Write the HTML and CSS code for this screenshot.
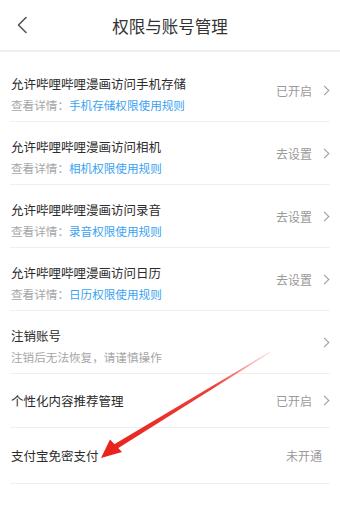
FILE: index.html
```html
<!DOCTYPE html>
<html lang="zh-CN">
<head>
<meta charset="utf-8">
<meta name="viewport" content="width=device-width, initial-scale=1">
<title>权限与账号管理</title>
<link rel="stylesheet" href="styles.css">
</head>
<body>

<header class="topbar">
  <svg class="back" width="12" height="18" viewBox="0 0 12 18">
    <path d="M10 1.5 L2.5 9 L10 16.5" fill="none" stroke="#555" stroke-width="1.6" stroke-linecap="round" stroke-linejoin="round"/>
  </svg>
  <h1 class="title">权限与账号管理</h1>
</header>

<div class="list">
  <div class="row">
    <div class="info">
      <p class="name">允许哔哩哔哩漫画访问手机存储</p>
      <p class="sub">查看详情：<span class="link">手机存储权限使用规则</span></p>
    </div>
    <div class="side"><span class="state">已开启</span><span class="arrow"></span></div>
  </div>
  <div class="row">
    <div class="info">
      <p class="name">允许哔哩哔哩漫画访问相机</p>
      <p class="sub">查看详情：<span class="link">相机权限使用规则</span></p>
    </div>
    <div class="side"><span class="state">去设置</span><span class="arrow"></span></div>
  </div>
  <div class="row">
    <div class="info">
      <p class="name">允许哔哩哔哩漫画访问录音</p>
      <p class="sub">查看详情：<span class="link">录音权限使用规则</span></p>
    </div>
    <div class="side"><span class="state">去设置</span><span class="arrow"></span></div>
  </div>
  <div class="row">
    <div class="info">
      <p class="name">允许哔哩哔哩漫画访问日历</p>
      <p class="sub">查看详情：<span class="link">日历权限使用规则</span></p>
    </div>
    <div class="side"><span class="state">去设置</span><span class="arrow"></span></div>
  </div>
  <div class="row">
    <div class="info">
      <p class="name">注销账号</p>
      <p class="sub">注销后无法恢复，请谨慎操作</p>
    </div>
    <div class="side"><span class="arrow"></span></div>
  </div>
  <div class="row single">
    <div class="info">
      <p class="name">个性化内容推荐管理</p>
    </div>
    <div class="side"><span class="state">已开启</span><span class="arrow"></span></div>
  </div>
  <div class="row single">
    <div class="info">
      <p class="name">支付宝免密支付</p>
    </div>
    <div class="side"><span class="state plain">未开通</span></div>
  </div>
</div>

<!-- red annotation arrow drawn over the list -->
<svg class="mark" width="340" height="519" viewBox="0 0 340 519">
  <defs>
    <linearGradient id="fade" x1="270" y1="352" x2="110" y2="450" gradientUnits="userSpaceOnUse">
      <stop offset="0" stop-color="#f2403a" stop-opacity="0.15"/>
      <stop offset="0.35" stop-color="#ec2a24" stop-opacity="0.9"/>
      <stop offset="1" stop-color="#e8231d"/>
    </linearGradient>
  </defs>
  <polygon points="270,351.6 270.4,352.4 116,449.5 113,445" fill="url(#fade)"/>
  <polygon points="101,458 110,439.5 122,452" fill="#e8231d"/>
</svg>

</body>
</html>
```

FILE: styles.css
```css
* {
  box-sizing: border-box;
}

body {
  margin: 0;
  background: #fff;
  font-family: "Noto Sans CJK SC", "Noto Sans", sans-serif;
  color: #333;
}

p {
  margin: 0;
}

/* top bar */
.topbar {
  height: 52px;
  display: flex;
  align-items: center;
  justify-content: center;
  border-bottom: 2px solid #efefef;
  position: relative;
}

.back {
  position: absolute;
  left: 16px;
  top: 16px;
}

.title {
  margin: 0;
  font-size: 16.5px;
  font-weight: normal;
  color: #333;
  line-height: 20px;
  padding-top: 1px;
}

/* list */
.list {
  padding: 7px 10px 0;
}

.row {
  display: flex;
  align-items: center;
  justify-content: space-between;
  height: 63px;
  border-bottom: 1px solid #efefef;
  padding-left: 1px;
}

.row.single {
  height: 54px;
}

.row.single:last-child {
  height: 56px;
}

.info {
  padding-top: 8px;
}

.single .info {
  padding-top: 0;
}

.name {
  font-size: 12.5px;
  line-height: 18px;
  color: #2b2b2b;
}

.sub {
  margin-top: 4px;
  font-size: 11.6px;
  line-height: 16px;
  color: #a6a6a6;
}

.link {
  color: #3aa2f2;
}

.side {
  display: flex;
  align-items: center;
}

.state {
  font-size: 12px;
  color: #9a9a9a;
}

.state.plain {
  margin-right: 8px;
}

.arrow {
  width: 7px;
  height: 7px;
  border-top: 1.3px solid #999;
  border-right: 1.3px solid #999;
  transform: rotate(45deg);
  margin-left: 9px;
  margin-right: 2px;
}

.mark {
  position: absolute;
  left: 0;
  top: 0;
  pointer-events: none;
}
```
